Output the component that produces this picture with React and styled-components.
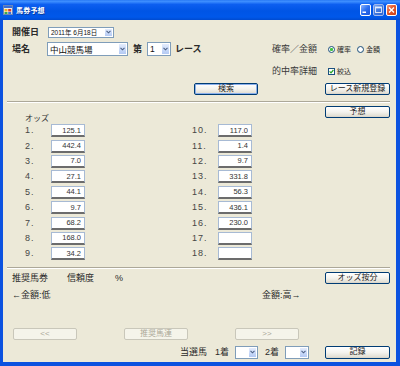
import React from 'react';
import styled, { createGlobalStyle } from 'styled-components';

const Global = createGlobalStyle`
  html, body { margin: 0; padding: 0; background: #fff; }
  body { font-family: "Liberation Sans", "Noto Sans CJK JP", sans-serif; }
  #root { width: 400px; height: 366px; }
`;

const FONT = `"Liberation Sans", "Noto Sans CJK JP", sans-serif`;

const Window = styled.div`
  width: 400px;
  height: 366px;
  display: flex;
  flex-direction: column;
  overflow: hidden;
  background: #0b52e0;
`;

const TitleBar = styled.div`
  height: 20px;
  flex: none;
  display: flex;
  align-items: center;
  padding: 0 3px 0 3px;
  background: linear-gradient(to bottom, #2a7bf5 0%, #3d8eff 8%, #0d5ff0 22%, #0055e5 55%, #0058ea 85%, #004bd0 100%);
`;

const Title = styled.span`
  color: #fff;
  font: bold 7px/1 ${FONT};
  margin-left: 3px;
  letter-spacing: 0.2px;
  text-shadow: 1px 1px 0 #0a3a9a;
`;

const CaptionButtons = styled.div`
  margin-left: auto;
  display: flex;
  gap: 2px;
`;

const CaptionButton = styled.div`
  width: 11px;
  height: 12px;
  box-sizing: border-box;
  border: 1px solid ${p => (p.dim ? '#9fb8ec' : '#fff')};
  border-radius: 2px;
  display: flex;
  align-items: center;
  justify-content: center;
  background: ${p =>
    p.kind === 'close'
      ? 'linear-gradient(135deg, #f49a7c 0%, #e3572c 45%, #c8401a 100%)'
      : p.dim
      ? 'linear-gradient(135deg, #7aa5f0 0%, #3f78e0 50%, #2f63cf 100%)'
      : 'linear-gradient(135deg, #8db6ff 0%, #2b6ef0 50%, #1c55d8 100%)'};
`;

const Frame = styled.div`
  flex: 1;
  display: flex;
  flex-direction: column;
  background: #ece9d8;
  border-style: solid;
  border-color: #0b52e0;
  border-width: 0 4px 4px 3px;
  padding: 6px 6px 3px 9px;
  min-height: 0;
`;

const Row = styled.div`
  display: flex;
  align-items: center;
  flex: none;
  height: ${p => p.h}px;
  margin-top: ${p => p.mt || 0}px;
  padding-left: ${p => p.pl || 0}px;
  justify-content: ${p => p.justify || 'flex-start'};
`;

const Label = styled.span`
  flex: none;
  font-family: ${FONT};
  font-size: ${p => p.fs || 9}px;
  font-weight: ${p => (p.bold ? 'bold' : 'normal')};
  color: ${p => p.color || '#2a2a2a'};
  width: ${p => (p.w ? `${p.w}px` : 'auto')};
  margin-left: ${p => p.ml || 0}px;
  line-height: 1;
  white-space: nowrap;
  align-self: ${p => p.self || 'auto'};
`;

const RightGroup = styled.div`
  margin-left: auto;
  width: 118px;
  display: flex;
  align-items: center;
`;

const Combo = styled.div`
  flex: none;
  width: ${p => p.w}px;
  height: ${p => p.h}px;
  margin-left: ${p => p.ml || 0}px;
  box-sizing: border-box;
  border: 1px solid #7f9db9;
  background: #fff;
  display: flex;
  align-items: stretch;
`;

const ComboText = styled.span`
  flex: 1;
  font-family: ${FONT};
  font-size: ${p => p.fs}px;
  color: #111;
  padding-left: 2px;
  display: flex;
  align-items: center;
  white-space: nowrap;
  overflow: hidden;
`;

const ComboArrow = styled.span`
  flex: none;
  width: 9px;
  box-sizing: border-box;
  border: 1px solid #fff;
  background: linear-gradient(to bottom, #e4ecfd 0%, #c6d7f7 60%, #b4c9f3 100%);
  display: flex;
  align-items: center;
  justify-content: center;
`;

const Button = styled.button`
  flex: none;
  width: ${p => p.w || 65}px;
  height: ${p => p.h || 12}px;
  margin-left: ${p => (p.ml === 'auto' ? 'auto' : `${p.ml || 0}px`)};
  padding: 0;
  box-sizing: border-box;
  border: 1px solid ${p => (p.disabled ? '#c9c7ba' : '#003c74')};
  border-radius: 2px;
  background: ${p =>
    p.disabled ? '#f5f4ea' : 'linear-gradient(to bottom, #ffffff 0%, #f4f3ee 50%, #e2dfd4 90%, #d6d0c5 100%)'};
  box-shadow: ${p => (p.primary ? 'inset 0 0 0 1px #8bb0ec' : 'none')};
  font-family: ${FONT};
  font-size: 8px;
  line-height: 1;
  white-space: nowrap;
  overflow: hidden;
  color: ${p => (p.disabled ? '#aca899' : '#222')};
  align-self: ${p => p.self || 'auto'};
`;

const Separator = styled.div`
  flex: none;
  height: 0;
  margin: ${p => p.mt}px 0 0 -5px;
  border-top: 1px solid #aca899;
  border-bottom: 1px solid #fff;
`;

const RadioItem = styled.span`
  display: flex;
  align-items: center;
  gap: 2px;
  margin-right: 6px;
`;

const RadioCircle = styled.span`
  flex: none;
  width: 7px;
  height: 7px;
  box-sizing: border-box;
  border-radius: 50%;
  border: 1px solid #1c5180;
  background: ${p =>
    p.checked
      ? 'radial-gradient(circle, #3fc43f 0 1.3px, #ffffff 1.8px, #e3e2da 100%)'
      : 'radial-gradient(circle, #ffffff 0 1.5px, #e3e2da 100%)'};
`;

const CheckBox = styled.span`
  flex: none;
  width: 7px;
  height: 7px;
  box-sizing: border-box;
  border: 1px solid #1c5180;
  background: #fff;
  display: flex;
  align-items: center;
  justify-content: center;
  margin-right: 2px;
`;

const HeadRow = styled.div`
  display: flex;
  justify-content: space-between;
  height: 17px;
  margin-top: 3px;
  flex: none;
`;

const OddsArea = styled.div`
  display: flex;
  gap: 107px;
  padding-left: 13px;
  flex: none;
`;

const OddsColumn = styled.div`
  display: grid;
  grid-template-columns: 26px 34px;
  grid-auto-rows: 15.4px;
  align-items: center;
`;

const OddsNo = styled.span`
  font-family: ${FONT};
  font-size: 9px;
  letter-spacing: 1px;
  color: #454545;
  line-height: 1;
`;

const OddsInput = styled.input`
  width: 34px;
  height: 13px;
  box-sizing: border-box;
  margin: 0;
  padding: 0 3px 0 0;
  border: 1px solid #a7bad4;
  border-bottom: 2px solid #6c6c6c;
  background: #fff;
  text-align: right;
  font-family: ${FONT};
  font-size: 7.5px;
  color: #333;
  outline: none;
`;

const NavRow = styled.div`
  display: grid;
  grid-template-columns: 64px 64px 64px;
  column-gap: 47px;
  padding-left: 1px;
  height: 12px;
  margin-top: 27px;
  flex: none;
`;

const Chevron = () => (
  <svg width="5" height="4" viewBox="0 0 5 4">
    <path d="M0.5 0.8 L2.5 2.8 L4.5 0.8" fill="none" stroke="#4d6185" strokeWidth="1.1" />
  </svg>
);

const ComboBox = ({ w, h, fs, text, ml }) => (
  <Combo w={w} h={h} ml={ml}>
    <ComboText fs={fs}>{text}</ComboText>
    <ComboArrow>
      <Chevron />
    </ComboArrow>
  </Combo>
);

const AppIcon = () => (
  <svg width="10" height="10" viewBox="0 0 10 10">
    <rect x="0.5" y="0.5" width="9" height="9" fill="#f3f1e6" stroke="#6b86b8" />
    <rect x="1" y="1" width="8" height="2" fill="#3a6fd8" />
    <rect x="1.5" y="4" width="3" height="2.5" fill="#f0b020" />
    <rect x="5.2" y="4" width="3" height="2.5" fill="#d83a2a" />
    <rect x="1.5" y="7" width="3" height="2" fill="#3aa84a" />
    <rect x="5.2" y="7" width="3" height="2" fill="#3a6fd8" />
  </svg>
);

const leftOdds = ['125.1', '442.4', '7.0', '27.1', '44.1', '9.7', '68.2', '168.0', '34.2'];
const rightOdds = ['117.0', '1.4', '9.7', '331.8', '56.3', '436.1', '230.0', '', ''];

export default function App() {
  return (
    <>
      <Global />
      <Window>
        <TitleBar>
          <AppIcon />
          <Title>馬券予想</Title>
          <CaptionButtons>
            <CaptionButton>
              <svg width="9" height="10" viewBox="0 0 9 10">
                <rect x="1.5" y="6.5" width="3.5" height="1.5" fill="#fff" />
              </svg>
            </CaptionButton>
            <CaptionButton dim>
              <svg width="9" height="10" viewBox="0 0 9 10">
                <rect x="1.5" y="2" width="6" height="5.5" fill="none" stroke="#e6eefc" strokeWidth="0.9" />
                <rect x="1.5" y="2" width="6" height="1.3" fill="#e6eefc" />
              </svg>
            </CaptionButton>
            <CaptionButton kind="close">
              <svg width="9" height="10" viewBox="0 0 9 10">
                <path d="M2 2.5 L7 7.5 M7 2.5 L2 7.5" stroke="#fff" strokeWidth="1.4" />
              </svg>
            </CaptionButton>
          </CaptionButtons>
        </TitleBar>

        <Frame>
          <Row h={12}>
            <Label bold w={35}>開催日</Label>
            <ComboBox w={66} h={11} fs={6.5} ml={1} text="2011年 6月18日" />
          </Row>

          <Row h={14} mt={4}>
            <Label bold w={35}>場名</Label>
            <ComboBox w={81} h={14} fs={8.5} text="中山競馬場" />
            <Label bold ml={5}>第</Label>
            <ComboBox w={24} h={14} fs={8.5} ml={5} text="1" />
            <Label bold ml={4}>レース</Label>
            <RightGroup>
              <Label w={56} color="#3a3a3a">確率／金額</Label>
              <RadioItem>
                <RadioCircle checked />
                <Label fs={7}>確率</Label>
              </RadioItem>
              <RadioItem>
                <RadioCircle />
                <Label fs={7}>金額</Label>
              </RadioItem>
            </RightGroup>
          </Row>

          <Row h={10} mt={10}>
            <RightGroup>
              <Label w={56} color="#3a3a3a">的中率詳細</Label>
              <CheckBox>
                <svg width="5" height="5" viewBox="0 0 5 5">
                  <path d="M0.6 2.4 L2 3.8 L4.4 1" fill="none" stroke="#21a121" strokeWidth="1.2" />
                </svg>
              </CheckBox>
              <Label fs={7}>絞込</Label>
            </RightGroup>
          </Row>

          <Row h={12} mt={7}>
            <Button w={64} ml={182} primary>検索</Button>
            <Button w={65} ml="auto">レース新規登録</Button>
          </Row>

          <Separator mt={6} />

          <HeadRow>
            <Label fs={8} ml={13} self="flex-end" color="#333">オッズ</Label>
            <Button w={65} self="flex-start">予想</Button>
          </HeadRow>

          <OddsArea>
            <OddsColumn>
              {leftOdds.map((v, i) => (
                <React.Fragment key={i}>
                  <OddsNo>{i + 1}.</OddsNo>
                  <OddsInput readOnly defaultValue={v} />
                </React.Fragment>
              ))}
            </OddsColumn>
            <OddsColumn>
              {rightOdds.map((v, i) => (
                <React.Fragment key={i}>
                  <OddsNo>{i + 10}.</OddsNo>
                  <OddsInput readOnly defaultValue={v} />
                </React.Fragment>
              ))}
            </OddsColumn>
          </OddsArea>

          <Separator mt={5.4} />

          <Row h={13} mt={3}>
            <Label w={55}>推奨馬券</Label>
            <Label w={48}>信頼度</Label>
            <Label>%</Label>
            <Button w={65} h={12} ml="auto">オッズ按分</Button>
          </Row>

          <Row h={11} mt={5}>
            <Label w={250}>←金額:低</Label>
            <Label>金額:高→</Label>
          </Row>

          <NavRow>
            <Button w={64} disabled>&lt;&lt;</Button>
            <Button w={64} disabled>推奨馬連</Button>
            <Button w={64} disabled>&gt;&gt;</Button>
          </NavRow>

          <Row h={13} mt={6} justify="flex-end">
            <Label>当選馬</Label>
            <Label ml={8}>1着</Label>
            <ComboBox w={23} h={13} fs={8} ml={6} text="" />
            <Label ml={7}>2着</Label>
            <ComboBox w={24} h={13} fs={8} ml={6} text="" />
            <Button w={65} h={13} ml={16}>記録</Button>
          </Row>
        </Frame>
      </Window>
    </>
  );
}
